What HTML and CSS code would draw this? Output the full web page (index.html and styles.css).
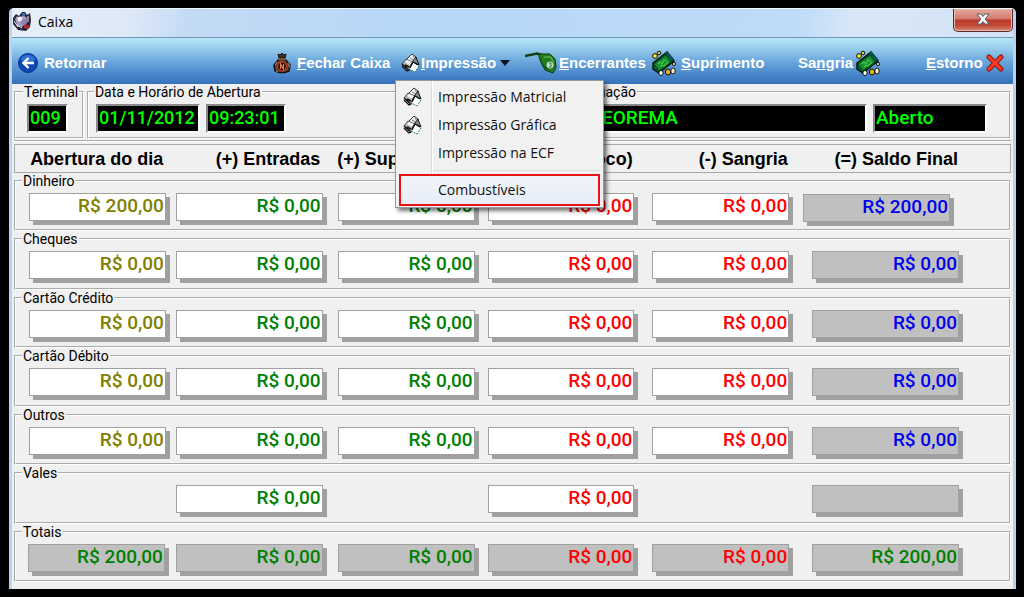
FILE: index.html
```html
<!DOCTYPE html>
<html lang="pt-BR">
<head>
<meta charset="utf-8">
<title>Caixa</title>
<link rel="stylesheet" href="styles.css">
</head>
<body>
<svg class="sprites" aria-hidden="true">
  <symbol id="printer" viewBox="0 0 20 20">
    <path d="M5 7 11 1l4 3-5 7z" fill="#f4f4f4" stroke="#333"/>
    <path d="m15 4 1 3 2 5-4-2-3-1z" fill="#8d8d8d" stroke="#111"/>
    <path d="M1 11 5 6l7 3-4 8-2-1z" fill="#b5b5b5" stroke="#555"/>
    <path d="M4 9 6 7l5 2-2 3z" fill="#f7f7f7"/>
    <path d="m1 11 6 5M1 13l5 5 2-1 3-7M4 12l4 2" stroke="#111" stroke-width="1.400" fill="none"/>
    <path d="m12 9 6 4-4 6-6-3z" fill="#fff"/>
    <path d="m9 15 3-6 5 3" fill="none" stroke="#111" stroke-width="1.300"/>
    <path d="m18 13-4 6-6-3" fill="none" stroke="#2e7f72" stroke-dasharray="2 1"/>
    <path d="m12 3 3 4M9 5l4 2" fill="none" stroke="#777"/>
  </symbol>
  <symbol id="money" viewBox="0 0 26 26">
    <path d="M2 13 16 2l7 9-15 12-6-4z" fill="#075f2b" stroke="#001a08" stroke-width="1.500"/>
    <path d="m3 14 12-9 5 7L8 21z" fill="#1a8a30" stroke="#004b18"/>
    <path d="m7 14 2-2 2 2 2-4 3 1M9 17l2-2 2 1 4-4" fill="none" stroke="#3fc546" stroke-width="1.300"/>
    <path d="m15 2 7 8" stroke="#0d505c" stroke-width="3"/>
    <circle cx="4" cy="6" r="2.400" fill="#f5e533" stroke="#111"/><circle cx="8" cy="3" r="1.800" fill="#e8d63a" stroke="#111"/>
    <ellipse cx="10" cy="23" rx="2.200" ry="2.500" fill="#fff" stroke="#111"/><ellipse cx="17" cy="22" rx="2.600" ry="3" fill="#e8b21c" stroke="#111"/>
    <ellipse cx="22" cy="21" rx="2.200" ry="3" fill="#fff3bd" stroke="#111"/><circle cx="23" cy="14" r="1.600" fill="#ddd" stroke="#111"/>
  </symbol>
</svg>
<div class="window">
  <header class="titlebar">
    <svg class="app-icon" viewBox="0 0 20 20" aria-hidden="true">
      <path d="M1 7 4 3l3 2 3-4h3l2 3 3-2 1 7-1 7-4 4-8-1-5-6z" fill="#292536"/>
      <path d="M3 8 5 5l3 2 3-3 4 3-1 5-4 4-5-2z" fill="#a99abf"/>
      <circle cx="8" cy="8" r="2.500" fill="#f2f2f7"/><circle cx="12" cy="11" r="3" fill="#8e83b5"/>
      <path d="M12 14h6l-2 4-4-1z" fill="#b3262b"/><path d="m2 10 4 6M16 5v6M5 14l5 3" stroke="#f2f2f7"/><path d="M10 2h3v3h-3z" fill="#4169ad"/>
    </svg>
    <h1 class="title">Caixa</h1>
    <button class="close" type="button" aria-label="Fechar">
      <svg viewBox="0 0 14 12" aria-hidden="true"><path d="M1 1h4l2 2.500L9 1h4L9.200 6 13 11H9L7 8.500 5 11H1l3.800-5z" fill="#fff" stroke="#525a68"/></svg>
    </button>
  </header>

  <nav class="toolbar">
    <button class="tool tool-back" type="button">
      <svg class="icon-back" viewBox="0 0 20 20" aria-hidden="true"><circle cx="10" cy="10" r="9.500" fill="#0c48b4" stroke="#07338e"/><ellipse cx="10" cy="6" rx="7" ry="4" fill="#2d6fd6"/><path d="M16 10H6M10.500 5 5.500 10l5 5" fill="none" stroke="#fff" stroke-width="2.400"/></svg>
      <span>Retornar</span>
    </button>
    <button class="tool" type="button">
      <svg class="icon-bag" viewBox="0 0 20 20" aria-hidden="true"><path d="m6 1 2 1 2-2 2 2 2-1-1 4H7z" fill="#4a3126" stroke="#111"/><path d="M7 6h6l5 6-1 6-4 1.500H7L3 18l-1-6z" fill="#5c4438" stroke="#111" stroke-width="1.500"/><path d="M6 6h8" stroke="#8a6a3d" stroke-width="1.500"/><circle cx="10" cy="13.500" r="4.500" fill="#170b08" stroke="#b8391c" stroke-width="1.500"/><path d="M8.500 16v-5l3 5v-5" fill="none" stroke="#f08050" stroke-width="1.200"/><path d="m3 12 2-3M4 18l2 1M16 10l2 4" stroke="#b89684"/></svg>
      <span><u>F</u>echar Caixa</span>
    </button>
    <div class="dropdown">
      <button class="tool" type="button" aria-haspopup="menu" aria-expanded="true">
        <svg class="icon-print" aria-hidden="true"><use href="#printer"/></svg>
        <span><u>I</u>mpressão</span>
        <svg class="caret" viewBox="0 0 10 6" aria-hidden="true"><path d="M0 0h10L5 6z" fill="#0b1220"/></svg>
      </button>
      <div class="menu" role="menu">
        <button class="menu-item" role="menuitem" type="button"><svg class="icon-print" aria-hidden="true"><use href="#printer"/></svg><span>Impressão Matricial</span></button>
        <button class="menu-item" role="menuitem" type="button"><svg class="icon-print" aria-hidden="true"><use href="#printer"/></svg><span>Impressão Gráfica</span></button>
        <button class="menu-item" role="menuitem" type="button"><i></i><span>Impressão na ECF</span></button>
        <hr>
        <button class="menu-item marked" role="menuitem" type="button"><i></i><span>Combustíveis</span></button>
      </div>
    </div>
    <button class="tool" type="button">
      <svg class="icon-pump" viewBox="0 0 33 22" aria-hidden="true"><path d="M0 4 12 1.500l6 2" fill="none" stroke="#163c14" stroke-width="2.500"/><path d="m13 2 12 0 5 5 1 8-3 6-8-3-4-8z" fill="#237b20" stroke="#0d3a0c"/><path d="m15 7 3 7 5 3" fill="none" stroke="#154d13" stroke-width="1.500"/><path d="m19 5 6 0 4 5" fill="none" stroke="#56ad45" stroke-width="1.500"/><circle cx="25" cy="13" r="3.500" fill="#b8dcc4"/><path d="M24 11h2v4h-2" fill="none" stroke="#34813a"/></svg>
      <span><u>E</u>ncerrantes</span>
    </button>
    <button class="tool tool-supply" type="button"><svg class="icon-money" aria-hidden="true"><use href="#money"/></svg><span><u>S</u>uprimento</span></button>
    <button class="tool tool-bleed" type="button"><span>Sa<u>n</u>gria</span><svg class="icon-money" aria-hidden="true"><use href="#money"/></svg></button>
    <button class="tool" type="button"><span><u>E</u>storno</span><svg class="icon-cancel" viewBox="0 0 18 18" aria-hidden="true"><path d="m3 3 12 12M15 3 3 15" stroke="#8f160e" stroke-width="5" stroke-linecap="round"/><path d="m3 3 12 12M15 3 3 15" stroke="#fb3a24" stroke-width="3" stroke-linecap="round"/></svg></button>
  </nav>

  <main class="client">
    <div class="status">
      <fieldset class="group"><legend>Terminal</legend><input class="led" aria-label="Terminal" value="009" readonly></fieldset>
      <fieldset class="group"><legend>Data e Horário de Abertura</legend><input class="led led-date" aria-label="Data" value="01/11/2012" readonly><input class="led led-time" aria-label="Horário" value="09:23:01" readonly></fieldset>
      <fieldset class="group"><legend>Situação</legend><input class="led led-name" aria-label="Nome" value="TEOREMA" readonly><input class="led led-state" aria-label="Situação" value="Aberto" readonly></fieldset>
    </div>

    <div class="heads columns">
      <span>Abertura do dia</span><span>(+) Entradas</span><span>(+) Suprimentos</span><span>(-) Vales (Troco)</span><span>(-) Sangria</span><span>(=) Saldo Final</span>
    </div>

    <div class="rows">
      <fieldset class="row columns"><legend>Dinheiro</legend>
        <input class="money olive" aria-label="Abertura do dia" value="R$ 200,00" readonly><input class="money green" aria-label="Entradas" value="R$ 0,00" readonly><input class="money green" aria-label="Suprimento" value="R$ 0,00" readonly><input class="money red" aria-label="Troco" value="R$ 0,00" readonly><input class="money red" aria-label="Sangria" value="R$ 0,00" readonly><input class="money blue shaded balance" aria-label="Saldo Final" value="R$ 200,00" readonly>
      </fieldset>
      <fieldset class="row columns"><legend>Cheques</legend>
        <input class="money olive" aria-label="Abertura do dia" value="R$ 0,00" readonly><input class="money green" aria-label="Entradas" value="R$ 0,00" readonly><input class="money green" aria-label="Suprimento" value="R$ 0,00" readonly><input class="money red" aria-label="Troco" value="R$ 0,00" readonly><input class="money red" aria-label="Sangria" value="R$ 0,00" readonly><input class="money blue shaded" aria-label="Saldo Final" value="R$ 0,00" readonly>
      </fieldset>
      <fieldset class="row columns"><legend>Cartão Crédito</legend>
        <input class="money olive" aria-label="Abertura do dia" value="R$ 0,00" readonly><input class="money green" aria-label="Entradas" value="R$ 0,00" readonly><input class="money green" aria-label="Suprimento" value="R$ 0,00" readonly><input class="money red" aria-label="Troco" value="R$ 0,00" readonly><input class="money red" aria-label="Sangria" value="R$ 0,00" readonly><input class="money blue shaded" aria-label="Saldo Final" value="R$ 0,00" readonly>
      </fieldset>
      <fieldset class="row columns"><legend>Cartão Débito</legend>
        <input class="money olive" aria-label="Abertura do dia" value="R$ 0,00" readonly><input class="money green" aria-label="Entradas" value="R$ 0,00" readonly><input class="money green" aria-label="Suprimento" value="R$ 0,00" readonly><input class="money red" aria-label="Troco" value="R$ 0,00" readonly><input class="money red" aria-label="Sangria" value="R$ 0,00" readonly><input class="money blue shaded" aria-label="Saldo Final" value="R$ 0,00" readonly>
      </fieldset>
      <fieldset class="row columns"><legend>Outros</legend>
        <input class="money olive" aria-label="Abertura do dia" value="R$ 0,00" readonly><input class="money green" aria-label="Entradas" value="R$ 0,00" readonly><input class="money green" aria-label="Suprimento" value="R$ 0,00" readonly><input class="money red" aria-label="Troco" value="R$ 0,00" readonly><input class="money red" aria-label="Sangria" value="R$ 0,00" readonly><input class="money blue shaded" aria-label="Saldo Final" value="R$ 0,00" readonly>
      </fieldset>
      <fieldset class="row columns"><legend>Vales</legend>
        <i></i><input class="money green" aria-label="Entradas" value="R$ 0,00" readonly><i></i><input class="money red" aria-label="Troco" value="R$ 0,00" readonly><i></i><input class="money blue shaded" aria-label="Saldo Final" value="" readonly>
      </fieldset>
      <fieldset class="row columns"><legend>Totais</legend>
        <input class="money green shaded total-open" aria-label="Abertura do dia" value="R$ 200,00" readonly><input class="money green shaded" aria-label="Entradas" value="R$ 0,00" readonly><input class="money green shaded" aria-label="Suprimento" value="R$ 0,00" readonly><input class="money red shaded" aria-label="Troco" value="R$ 0,00" readonly><input class="money red shaded" aria-label="Sangria" value="R$ 0,00" readonly><input class="money green shaded" aria-label="Saldo Final" value="R$ 200,00" readonly>
      </fieldset>
    </div>
  </main>
</div>
</body>
</html>
```
FILE: styles.css
```css
* { box-sizing: border-box; }

body {
  margin: 0;
  padding: 8px 8px 8px 9px;
  min-height: 100vh;
  display: flex;
  background: #000;
  font-family: "Liberation Sans", Arial, sans-serif;
  color: #000;
}

button, input { font: inherit; }
.sprites { position: absolute; width: 0; height: 0; }

.window {
  flex: 1;
  min-width: 0;
  display: flex;
  flex-direction: column;
  padding: 0 3px;
  border-radius: 5px 5px 0 0;
  background: #b9d3ec;
  border-top: 1px solid #eef6fd;
}

/* Title bar */
.titlebar {
  display: flex;
  align-items: flex-start;
  height: 29px;
  border-bottom: 1px solid #6f95b9;
  background: linear-gradient(100deg, #e6eff9 0%, #dde9f7 12%, #c3daf4 18%, #b7d7f7 40%, #bedbf8 78%, #d8e7f8 84%, #d3e3f5 100%);
}
.app-icon { width: 20px; height: 20px; margin-top: 2px; }
.title {
  margin: 3px auto 0 6px;
  font: 14px/20px "Open Sans", "Noto Sans", sans-serif;
}
.close {
  width: 60px;
  height: 23px;
  padding: 0;
  border: 1px solid #5b2a2d;
  border-top: 0;
  border-radius: 0 0 5px 5px;
  background: linear-gradient(#e5aaa0, #d4786b 45%, #b93a28 50%, #c04a39 75%, #dc8a78);
  box-shadow: inset 0 0 0 1px #e9b5ab;
}
.close svg { width: 14px; height: 12px; display: block; margin: 0 auto 2px; }

/* Toolbar */
.toolbar {
  display: grid;
  grid-template-columns: 254fr 129fr 124fr 126fr 147fr 128fr 87fr;
  height: 46px;
  padding: 4px 0 0 6px;
  background: linear-gradient(#b8e6f8 0%, #9cd0ee 20%, #6ca8dc 50%, #4886c9 80%, #3672bb 100%);
}
.tool {
  display: flex;
  align-items: center;
  height: 42px;
  padding: 0;
  border: 0;
  background: none;
  color: #fff;
  font-weight: bold;
  font-size: 15px;
  line-height: 20px;
  white-space: nowrap;
}
.tool svg { flex: none; }
.tool-back { gap: 6px; }
.icon-back { width: 20px; height: 20px; }
.icon-bag { width: 20px; height: 22px; margin-right: 5px; }
.icon-print { width: 20px; height: 20px; }
.icon-pump { width: 33px; height: 22px; margin-right: 1px; }
.icon-money { width: 26px; height: 26px; }
.tool-supply { gap: 4px; }
.tool-bleed { gap: 2px; }
.icon-cancel { width: 18px; height: 18px; margin-left: 3px; }
.caret { width: 10px; height: 6px; margin-left: 4px; }

.dropdown { position: relative; }
.menu {
  position: absolute;
  z-index: 2;
  top: 38px;
  left: -6px;
  width: 209px;
  padding: 2px 3px 1px;
  border: 1px solid #979797;
  background: linear-gradient(90deg, #f1f1f1 35px, #dcdcdc 35px, #dcdcdc 36px, #fff 36px, #fff 37px, #f1f1f1 37px);
  box-shadow: 3px 3px 4px #0008;
}
.menu-item {
  display: grid;
  grid-template-columns: 35px 1fr;
  align-items: center;
  width: 100%;
  height: 28px;
  padding: 0 0 0 4px;
  border: 0;
  background: none;
  color: #111;
  text-align: left;
  font: 14px/20px "Open Sans", "Noto Sans", sans-serif;
}
.menu hr { margin: 3px 0 3px 34px; border: 0; border-top: 1px solid #dedede; }
.menu-item.marked {
  height: 32px;
  padding-left: 2px;
  border: 2px solid #e81319;
  background: linear-gradient(#f1f4f9, #e7eef8);
}

/* Client area */
.client {
  flex: 1;
  display: flex;
  flex-direction: column;
  padding: 0 2px 7px;
  background: #f0f0f0;
}
fieldset {
  min-width: 0;
  margin: 0;
  padding: 0;
  border: 2px groove #fff;
}
legend {
  margin-left: -7px;
  padding: 0 1px;
  font: 14px/16px Roboto, "Liberation Sans", sans-serif;
}

.status {
  display: grid;
  grid-template-columns: 70fr 487fr 435fr;
  gap: 3px;
  padding-bottom: 1px;
  border-bottom: 2px groove #fff;
}
.group { display: flex; gap: 6px; padding: 4px 22px 4px 7px; }
.group legend { margin-left: -2px; }
.group:first-child { padding: 4px 11px; }
.group:first-child legend { margin-left: -4px; }
.group:last-child legend { margin-left: -5px; }
.led {
  width: 41px;
  height: 29px;
  padding: 0 0 2px 1px;
  border: 2px solid;
  border-color: #8a8a8a #fff #fff #8a8a8a;
  border-radius: 0;
  background: #000;
  color: #0f0;
  font: 500 18px/23px Roboto, "Liberation Sans", sans-serif;
}
.led-date { width: 104px; }
.led-time { width: 80px; }
.led-name { flex: 1; min-width: 0; padding-left: 3px; }
.led-state { width: 114px; }
.led-name, .led-state { font-size: 19px; }

.columns {
  display: grid;
  grid-template-columns: 147fr 162fr 150fr 165fr 160fr 197fr;
  padding-left: 13px;
}
.columns > * { min-width: 0; }
.columns > :nth-last-child(6) { margin-right: 10px; }
.columns > :nth-last-child(5) { margin-right: 15px; }
.columns > :nth-last-child(4) { margin-right: 13px; }
.columns > :nth-last-child(3) { margin-right: 18px; }
.columns > :nth-last-child(2) { margin-right: 23px; }
.columns > :nth-last-child(1) { margin-right: 50px; }

.heads {
  height: 29px;
  margin-top: 2px;
  border: 1px solid #a8a8a8;
  font: bold 18px/28px "Liberation Sans", Arial, sans-serif;
  text-align: right;
  white-space: nowrap;
}
.heads span { padding-right: 2px; }

.rows { flex: 1; display: grid; grid-auto-rows: 1fr; }
.row { padding-top: 4px; padding-bottom: 6px; align-items: start; }
.money {
  width: auto;
  height: 28px;
  padding: 0 1px 3px;
  border: 1px solid #a0a0a0;
  border-radius: 0;
  background: #fff;
  box-shadow: 4px 4px 0 #a0a0a0;
  text-align: right;
  font: 500 19px/23px Roboto, "Liberation Sans", sans-serif;
}
.shaded { background: #c0c0c0; }
.olive { color: #808000; }
.green { color: #008000; }
.red { color: #f00; }
.blue { color: #00e; }
.columns > .balance { margin: 1px 59px 0 -9px; }
.columns > .total-open { margin: 0 11px 0 -1px; }
```
